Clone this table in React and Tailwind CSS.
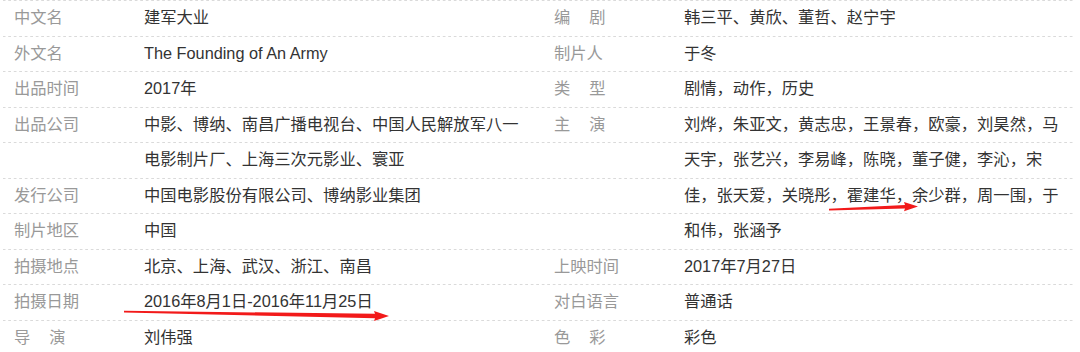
import React from 'react'

const rows = [
  [['中文名'], '建军大业', ['编', '剧'], '韩三平、黄欣、董哲、赵宁宇'],
  [['外文名'], 'The Founding of An Army', ['制片人'], '于冬'],
  [['出品时间'], '2017年', ['类', '型'], '剧情，动作，历史'],
  [['出品公司'], '中影、博纳、南昌广播电视台、中国人民解放军八一', ['主', '演'], '刘烨，朱亚文，黄志忠，王景春，欧豪，刘昊然，马'],
  [null, '电影制片厂、上海三次元影业、寰亚', null, '天宇，张艺兴，李易峰，陈晓，董子健，李沁，宋'],
  [['发行公司'], '中国电影股份有限公司、博纳影业集团', null, '佳，张天爱，关晓彤，霍建华，余少群，周一围，于'],
  [['制片地区'], '中国', null, '和伟，张涵予'],
  [['拍摄地点'], '北京、上海、武汉、浙江、南昌', ['上映时间'], '2017年7月27日'],
  [['拍摄日期'], '2016年8月1日-2016年11月25日', ['对白语言'], '普通话'],
  [['导', '演'], '刘伟强', ['色', '彩'], '彩色'],
]

function Label({ parts }) {
  if (!parts) return <div className="w-[130px] shrink-0" />
  if (parts.length === 2) {
    return (
      <div className="w-[130px] shrink-0 text-[#999]">
        <span className="mr-[19px]">{parts[0]}</span>
        {parts[1]}
      </div>
    )
  }
  return <div className="w-[130px] shrink-0 text-[#999]">{parts[0]}</div>
}

export default function App() {
  return (
    <div
      className="relative w-[1080px] h-[352px] overflow-hidden bg-white text-[16.3px] leading-[35.5px]"
      style={{ fontFamily: '"Liberation Sans", "Noto Sans CJK SC", sans-serif' }}
    >
      <div className="ml-[3px] w-[1072px]">
        {rows.map((r, i) => (
          <div
            key={i}
            className="flex h-[35.5px] items-center bg-[linear-gradient(to_right,#dadada_55%,transparent_55%)] bg-[length:5.5px_1px] bg-repeat-x bg-top"
          >
            <div className="flex w-[537px] shrink-0 pl-[11px]">
              <Label parts={r[0]} />
              <div className="text-[#333] whitespace-nowrap">{r[1]}</div>
            </div>
            <div className="flex flex-1 pl-[14px]">
              <Label parts={r[2]} />
              <div className="text-[#333] whitespace-nowrap">{r[3]}</div>
            </div>
          </div>
        ))}
      </div>

      {/* hand-drawn red annotation arrows */}
      <svg className="absolute left-0 top-0 pointer-events-none" width="1080" height="352">
        <polygon
          fill="#f21a1a"
          points="124,310.8 375,313.8 374,311 389,316 374,321 375,318.2 124,312.4"
        />
        <polygon
          fill="#f21a1a"
          points="829,208.8 905,205 904,202 918,206.5 904,211.2 905,208.4 829,210.4"
        />
      </svg>
    </div>
  )
}
